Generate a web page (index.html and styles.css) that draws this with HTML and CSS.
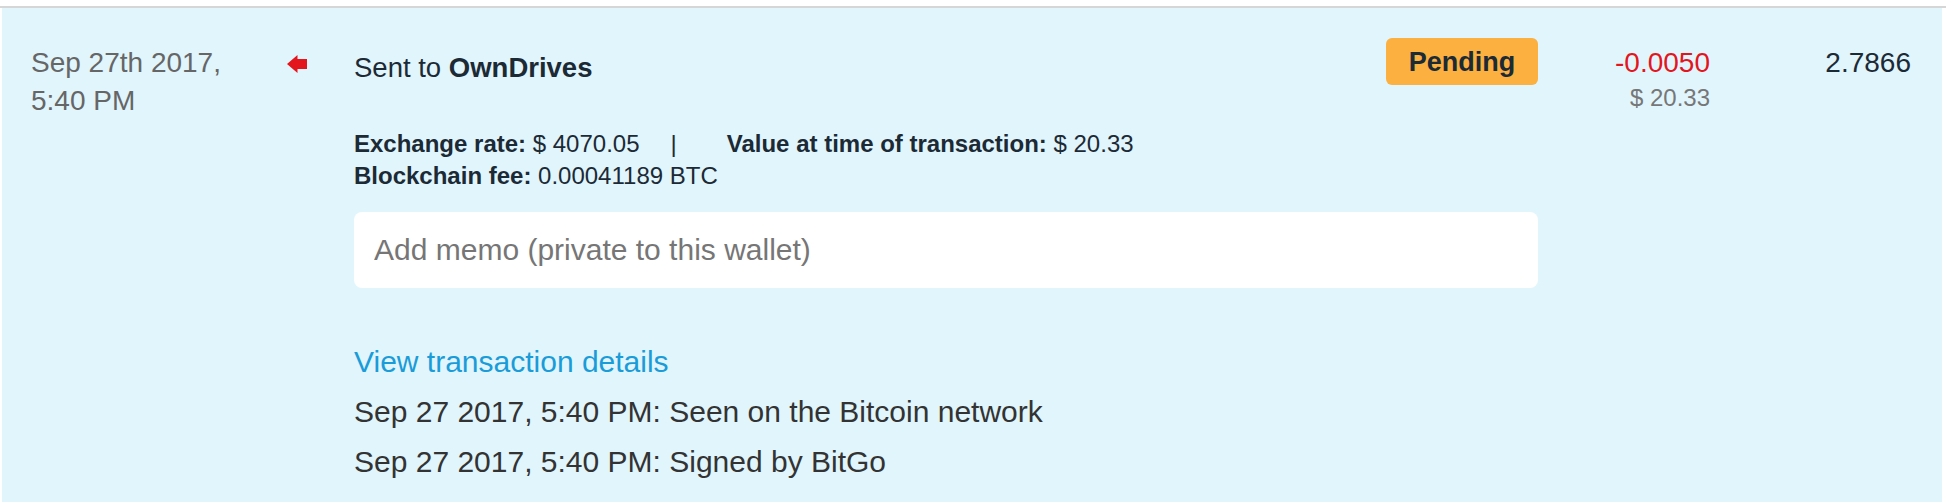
FILE: index.html
```html
<!DOCTYPE html>
<html lang="en">
<head>
<meta charset="utf-8">
<title>Wallet transactions</title>
<link rel="stylesheet" href="styles.css">
</head>
<body>
<div class="tx-list">
  <div class="tx-row">
    <div class="tx-date">Sep 27th 2017,<br>5:40 PM</div>

    <div class="tx-dir">
      <svg class="arrow-out" width="20" height="18" viewBox="0 0 20 18" aria-hidden="true">
        <polygon points="0,9 10.5,0 10.5,4 20,4 20,14 10.5,14 10.5,18" fill="#e3161e"/>
      </svg>
    </div>

    <div class="tx-main">
      <div class="tx-head">
        <div class="tx-title">Sent to <strong>OwnDrives</strong></div>
        <span class="badge badge-pending">Pending</span>
      </div>

      <div class="tx-facts">
        <div class="fact-line">
          <span class="fact"><b>Exchange rate:</b> $ 4070.05</span><span class="fact-sep">|</span><span class="fact"><b>Value at time of transaction:</b> $ 20.33</span>
        </div>
        <div class="fact-line">
          <span class="fact"><b>Blockchain fee:</b> 0.00041189 BTC</span>
        </div>
      </div>

      <input class="memo" type="text" placeholder="Add memo (private to this wallet)">

      <a class="tx-link" href="#">View transaction details</a>
      <ul class="tx-history">
        <li>Sep 27 2017, 5:40 PM: Seen on the Bitcoin network</li>
        <li>Sep 27 2017, 5:40 PM: Signed by BitGo</li>
      </ul>
    </div>

    <div class="tx-amount">
      <div class="amount-btc negative">-0.0050</div>
      <div class="amount-fiat">$ 20.33</div>
    </div>

    <div class="tx-balance">2.7866</div>
  </div>
</div>
</body>
</html>
```

FILE: styles.css
```css
html, body {
  margin: 0;
  padding: 0;
  background: #ffffff;
  overflow: hidden;
}

body {
  font-family: "Liberation Sans", Arial, Helvetica, sans-serif;
  color: #1c2a35;
}

.tx-list {
  margin-top: 6px;
  border-top: 2px solid #d6d6d6;
}

.tx-row {
  margin: 0 4px 0 2px;
  padding: 30px 31px 15px 29px;
  background: #e1f5fd;
  display: grid;
  grid-template-columns: 256px 67px 1184px 172px 201px;
  align-items: start;
}

/* left column: date/time */
.tx-date {
  margin-top: 6px;
  font-size: 28px;
  line-height: 38px;
  color: #666666;
}

/* direction arrow */
.tx-dir {
  margin-top: 17px;
  display: flex;
}

.arrow-out {
  display: block;
}

/* main column */
.tx-main {
  display: flex;
  flex-direction: column;
}

.tx-head {
  display: flex;
  justify-content: space-between;
  align-items: flex-start;
}

.tx-title {
  margin-top: 6px;
  font-size: 27.5px;
  line-height: 48px;
  color: #1c2a35;
}

.tx-title strong {
  font-weight: 700;
}

.badge {
  display: inline-block;
  box-sizing: border-box;
  width: 152px;
  height: 47px;
  padding-top: 2px;
  border-radius: 6px;
  font-size: 27px;
  line-height: 45px;
  font-weight: 700;
  text-align: center;
}

.badge-pending {
  background: #fbb040;
  color: #1c2a35;
}

.tx-facts {
  margin-top: 36px;
  font-size: 24px;
  line-height: 32px;
  color: #1c2a35;
}

.fact b {
  font-weight: 700;
}

.fact-sep {
  margin: 0 50px 0 31px;
}

.memo {
  display: block;
  box-sizing: border-box;
  width: 100%;
  height: 76px;
  margin-top: 20px;
  padding: 0 20px;
  border: none;
  border-radius: 8px;
  background: #ffffff;
  font-family: "Liberation Sans", Arial, Helvetica, sans-serif;
  font-size: 30px;
  color: #1c2a35;
  outline: none;
}

.memo::placeholder {
  color: #767676;
  opacity: 1;
}

.tx-link {
  margin-top: 49px;
  font-size: 30px;
  line-height: 50px;
  color: #1a9cd8;
  text-decoration: none;
  align-self: flex-start;
}

.tx-history {
  list-style: none;
  margin: 0;
  padding: 0;
  font-size: 30px;
  line-height: 50px;
  color: #333333;
}

/* amount columns */
.tx-amount {
  margin-top: 6px;
  text-align: right;
}

.amount-btc {
  font-size: 28px;
  line-height: 38px;
}

.negative {
  color: #e3161e;
}

.amount-fiat {
  font-size: 24px;
  line-height: 32px;
  color: #777777;
}

.tx-balance {
  margin-top: 6px;
  font-size: 28px;
  line-height: 38px;
  text-align: right;
  color: #1c2a35;
}
```
